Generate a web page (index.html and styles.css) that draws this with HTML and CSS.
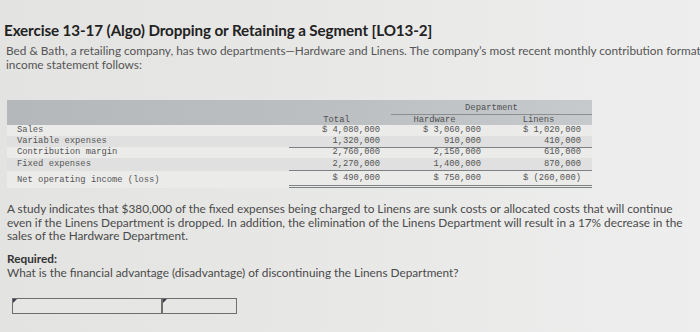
FILE: index.html
```html
<!DOCTYPE html>
<html>
<head>
<meta charset="utf-8">
<link rel="stylesheet" href="styles.css">
</head>
<body>
<div class="page">
  <h1 class="title">Exercise 13-17 (Algo) Dropping or Retaining a Segment [LO13-2]</h1>
  <p class="intro">Bed &amp; Bath, a retailing company, has two departments—Hardware and Linens. The company’s most recent monthly contribution format<br>income statement follows:</p>

  <div class="stmt">
    <div class="hdr hdr-a">
      <div class="c-label"></div>
      <div class="c-gap"></div>
      <div class="dept">Department</div>
    </div>
    <div class="hdr hdr-b">
      <div class="c-label"></div>
      <div class="c-num h">Total</div>
      <div class="c-num h">Hardware</div>
      <div class="c-num h">Linens</div>
    </div>
    <div class="row light">
      <div class="c-label">Sales</div>
      <div class="c-num">$ 4,080,000</div>
      <div class="c-num">$ 3,060,000</div>
      <div class="c-num">$ 1,020,000</div>
    </div>
    <div class="row dark">
      <div class="c-label">Variable expenses</div>
      <div class="c-num ul">1,320,000</div>
      <div class="c-num ul">910,000</div>
      <div class="c-num ul">410,000</div>
    </div>
    <div class="row light">
      <div class="c-label">Contribution margin</div>
      <div class="c-num">2,760,000</div>
      <div class="c-num">2,150,000</div>
      <div class="c-num">610,000</div>
    </div>
    <div class="row dark tall">
      <div class="c-label">Fixed expenses</div>
      <div class="c-num ul">2,270,000</div>
      <div class="c-num ul">1,400,000</div>
      <div class="c-num ul">870,000</div>
    </div>
    <div class="row light net">
      <div class="c-label">Net operating income (loss)</div>
      <div class="c-num dul">$ 490,000</div>
      <div class="c-num dul">$ 750,000</div>
      <div class="c-num dul">$ (260,000)</div>
    </div>
  </div>

  <p class="study">A study indicates that $380,000 of the fixed expenses being charged to Linens are sunk costs or allocated costs that will continue<br>even if the Linens Department is dropped. In addition, the elimination of the Linens Department will result in a 17% decrease in the<br>sales of the Hardware Department.</p>

  <p class="req"><strong>Required:</strong><br>What is the financial advantage (disadvantage) of discontinuing the Linens Department?</p>

  <div class="answer">
    <div class="box wide"><span class="flag"></span></div>
    <div class="box narrow"><span class="flag"></span></div>
  </div>
</div>
</body>
</html>
```

FILE: styles.css
```css
html, body {
  margin: 0;
  padding: 0;
}
body {
  width: 700px;
  height: 332px;
  overflow: hidden;
  background: linear-gradient(to right, #e3e3e1 0%, #e8e8e7 50%, #eeeeee 100%);
  font-family: Lato, "Liberation Sans", sans-serif;
  color: #4a4a4a;
}
.page {
  padding: 21px 0 0 4px;
}
.title {
  margin: 0;
  font-size: 15.2px;
  line-height: 18px;
  font-weight: 700;
  color: #222;
  letter-spacing: -0.1px;
}
.intro {
  margin: 5px 0 0 2px;
  font-size: 11.8px;
  line-height: 14px;
  white-space: nowrap;
  color: #555;
}
.stmt {
  margin: 28px 0 0 3px;
  width: 585px;
  font-family: "Liberation Mono", "DejaVu Sans Mono", monospace;
  font-size: 8.8px;
  color: #555;
}
.hdr, .row {
  display: grid;
  grid-template-columns: 282px 95px 101px 107px;
}
.hdr {
  background: linear-gradient(to right, #b4b8ba 0%, #bcc0c2 60%, #c6cacd 100%);
}
.hdr-a {
  grid-template-columns: 282px 102px 201px;
  height: 15px;
}
.dept {
  border-bottom: 1px solid #8a8e90;
  text-align: center;
  line-height: 12px;
  padding-top: 2px;
  height: 12px;
  color: #505050;
}
.hdr-b {
  height: 10px;
  line-height: 10px;
}
.hdr-b .h {
  text-align: center;
  padding-right: 0;
  color: #505050;
}
.row {
  height: 11px;
  line-height: 11px;
}
.row.light { background: #ebebea; }
.row.dark { background: #dfe0df; }
.row.tall {
  height: 13px;
  line-height: 12px;
}
.row.net {
  height: 17px;
  line-height: 15px;
  align-items: end;
}
.c-label {
  padding-left: 10px;
}
.c-num {
  text-align: right;
  padding-right: 4px;
  white-space: nowrap;
}
.row .c-num:nth-child(4) { padding-right: 11px; }
.ul {
  border-bottom: 1px solid #7d8183;
}
.dul {
  border-bottom: 3px double #7d8183;
  height: 14px;
}
.study {
  margin: 14px 0 0 3px;
  font-size: 11.8px;
  line-height: 13.5px;
  white-space: nowrap;
  color: #4a4a4a;
}
.req {
  margin: 9px 0 0 3px;
  font-size: 11.8px;
  line-height: 14px;
  color: #4a4a4a;
}
.req strong {
  color: #333;
}
.answer {
  display: flex;
  margin: 18px 0 0 8px;
}
.box {
  position: relative;
  height: 14px;
  border: 1.5px solid #6e6e6e;
  background: #e6e6e5;
}
.box.wide { width: 148px; }
.box.narrow { width: 73px; border-left-width: 2px; margin-left: -1.5px; }
.flag {
  position: absolute;
  left: 0;
  top: 0;
  width: 0;
  height: 0;
  border-top: 4px solid #3a3f46;
  border-right: 4px solid transparent;
}
```
